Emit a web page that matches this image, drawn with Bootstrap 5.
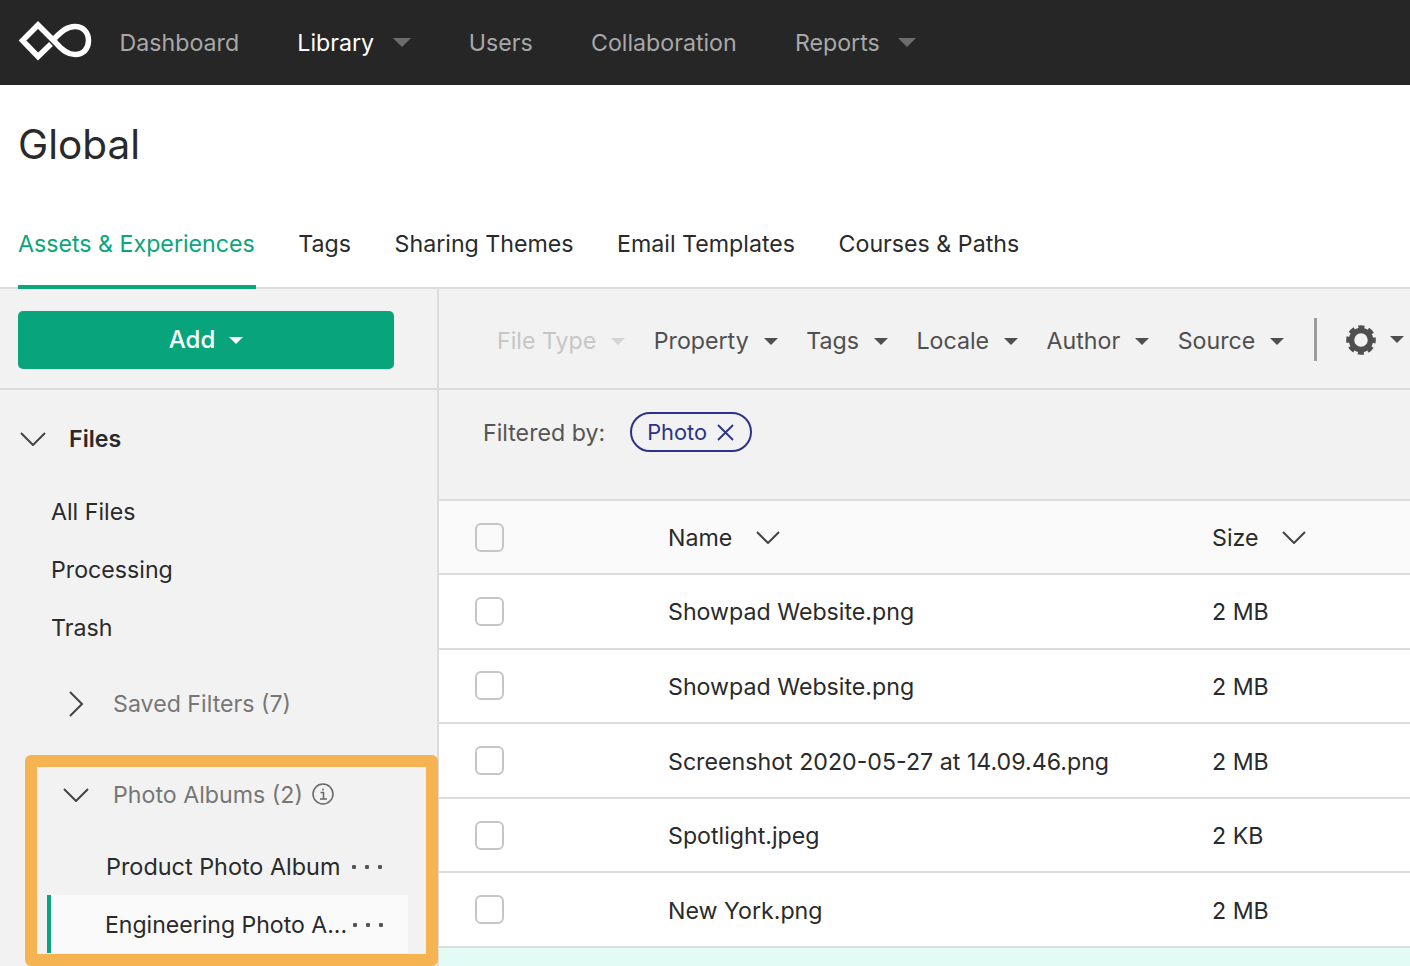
<!DOCTYPE html>
<html lang="en">
<head>
  <meta charset="UTF-8" />
  <title>Library - Global</title>
  <link href="https://cdn.jsdelivr.net/npm/bootstrap@5.3.0/dist/css/bootstrap.min.css" rel="stylesheet">
  <style>
    html, body { height: 966px; overflow: hidden; }
    body { font-family: Inter, "Liberation Sans", sans-serif; font-size: 23.2px; color: #2a2a2a; background: #fff; }
    a { text-decoration: none; color: inherit; }
    .top-bar { height: 85px; background: #262626; padding: 1px 0 0 18px; gap: 58.2px; }
    .top-bar .brand-mark { margin-right: -30.7px; margin-top: -5px; flex: none; }
    .top-link { color: #a8a8a8; white-space: nowrap; }
    .top-link.is-on { color: #fff; }
    .top-caret { display: inline-block; border-left: 9px solid transparent; border-right: 9px solid transparent; border-top: 9px solid #6c6c6c; margin-left: 18.5px; vertical-align: 4px; }
    .page-head { height: 204px; border-bottom: 2px solid #dcdcdc; padding-left: 18px; }
    .page-title { font-size: 40.5px; font-weight: 400; line-height: 50px; margin: 0; padding-top: 35px; color: #2a2a2a; }
    .tab-row { gap: 43.5px; margin-top: 60px; }
    .tab-item { height: 57px; line-height: 28px; white-space: nowrap; }
    .tab-item.is-on { color: #0aa57b; border-bottom: 4px solid #0aa57b; padding-right: 1px; margin-right: -1px; height: 59px; }
    .split { height: 677px; }
    .side-col { width: 439px; flex: none; background: #f2f2f2; border-right: 2px solid #dcdcdc; }
    .add-wrap { height: 101px; padding: 21.5px 0 0 18px; border-bottom: 2px solid #dcdcdc; }
    .btn-add { width: 376px; height: 58px; background: #08a57c; color: #fff; font-size: 24px; font-weight: 500; border: 0; border-radius: 5px; }
    .btn-add:hover { background: #08a57c; color: #fff; }
    .btn-add i { display: inline-block; border-left: 7px solid transparent; border-right: 7px solid transparent; border-top: 7px solid #fff; margin-left: 14px; vertical-align: 4px; }
    .side-head { height: 58px; }
    .files-head { padding-left: 20px; margin-top: 20px; font-weight: 600; }
    .files-head svg { margin-right: 23px; }
    .side-links { margin-top: 15px; }
    .side-link { height: 58px; line-height: 58px; padding-left: 51px; }
    .muted-head { color: #777; white-space: nowrap; }
    .saved-head { padding-left: 68px; margin-top: 18px; height: 58px; }
    .saved-head svg { margin-right: 29px; }
    .album-box { margin: 22px 0 0 25px; width: 413px; height: 211px; border: 12px solid #f5b451; border-radius: 6px; background: #f2f2f2; overflow: hidden; }
    .album-head { height: 56px; padding-left: 26px; }
    .album-head svg.chev { margin-right: 24px; }
    .album-head svg.info { margin-left: 9px; margin-top: -3px; }
    .album-row { height: 58px; padding-left: 69px; padding-right: 44px; white-space: nowrap; font-size: 23.4px; }
    .album-first { margin-top: 15px; }
    .album-row.is-on { background: #fafafa; margin: -1px 18px 0 10px; padding-left: 54px; padding-right: 25px; padding-top: 2px; border-left: 4px solid #0aa57b; font-size: 23.05px; }
    .album-name { flex: 1 1 auto; min-width: 0; }
    .dots { flex: none; width: 30px; height: 4px; background: radial-gradient(circle at 2px 2px, #555 2px, transparent 2.4px) 0 0 / 13px 4px repeat-x; }
    .main-col { flex: 1 1 auto; min-width: 0; background: #f2f2f2; }
    .filter-bar { height: 101px; padding: 5px 0 0 58px; border-bottom: 2px solid #dcdcdc; white-space: nowrap; color: #4f4f4f; }
    .filter-item { margin-right: 28.5px; flex: none; }
    .filter-item i { display: inline-block; border-left: 7px solid transparent; border-right: 7px solid transparent; border-top: 7px solid #4f4f4f; margin-left: 15px; vertical-align: 4px; }
    .filter-item.is-off { color: #c6c6c6; }
    .filter-item.is-off i { border-top-color: #d4d4d4; }
    .filter-sep { flex: none; width: 3px; height: 43px; background: #9c9c9c; margin: -3px 29px 0 1px; }
    .gear-icon { flex: none; margin-top: -2px; }
    .gear-caret { flex: none; display: inline-block; border-left: 7px solid transparent; border-right: 7px solid transparent; border-top: 7px solid #4f4f4f; margin: -4px 0 0 14px; }
    .filtered-row { height: 111px; padding: 21px 0 0 44px; border-bottom: 2px solid #dcdcdc; color: #555; }
    .filtered-label { padding-top: 5px; }
    .filter-chip { height: 40px; margin-left: 25px; padding: 0 16px 0 15px; border: 2px solid #2b3388; border-radius: 20px; color: #2b3388; margin-top: 1px; font-size: 21.8px; }
    .filter-chip svg { margin-left: 10px; }
    .file-row { height: 74.6px; background: #fff; border-bottom: 2px solid #dcdcdc; }
    .file-row.is-head { background: #fafafa; height: 74px; }
    .tick-cell { width: 229px; flex: none; padding-left: 36px; }
    .tick { width: 29px; height: 29px; border: 2px solid #c6c6c6; border-radius: 6px; background: #fff; }
    .is-head .tick { background: #fafafa; }
    .name-cell { width: 544px; flex: none; white-space: nowrap; padding-top: 3px; }
    .size-cell { flex: 1 1 auto; white-space: nowrap; padding-top: 3px; }
    .is-head svg { margin-left: 24px; margin-top: -2px; }
    .mint-row { height: 20px; background: #e2fbf4; }
  </style>
</head>
<body>
  <!-- Top navigation -->
  <nav class="top-bar d-flex align-items-center">
    <svg class="brand-mark" width="74" height="44" viewBox="0 0 74 44" fill="none" stroke="#fff" stroke-width="5.500">
      <path d="M33 25 L20 37.500 L4.500 21.500 L20 6 L38 24 C45 32 50 35.500 57 35.500 C66 35.500 70.500 29 70.500 21.500 C70.500 13 65 7.500 57 7.500 C49 7.500 44 12 37 19"/>
    </svg>
    <a class="top-link" href="#">Dashboard</a>
    <a class="top-link is-on" href="#">Library<span class="top-caret"></span></a>
    <a class="top-link" href="#">Users</a>
    <a class="top-link" href="#">Collaboration</a>
    <a class="top-link" href="#">Reports<span class="top-caret"></span></a>
  </nav>

  <!-- Title and tabs -->
  <header class="page-head">
    <h1 class="page-title">Global</h1>
    <div class="tab-row d-flex">
      <a class="tab-item is-on" href="#">Assets &amp; Experiences</a>
      <a class="tab-item" href="#">Tags</a>
      <a class="tab-item" href="#">Sharing Themes</a>
      <a class="tab-item" href="#">Email Templates</a>
      <a class="tab-item" href="#">Courses &amp; Paths</a>
    </div>
  </header>

  <div class="split d-flex">
    <!-- Left column -->
    <aside class="side-col">
      <div class="add-wrap">
        <button class="btn btn-add" type="button">Add<i></i></button>
      </div>
      <div class="side-head files-head d-flex align-items-center">
        <svg width="26" height="14" viewBox="0 0 26 14" fill="none" stroke="#444" stroke-width="2"><path d="M1 1l12 12L25 1"/></svg>
        Files
      </div>
      <div class="side-links">
        <a class="side-link d-block" href="#">All Files</a>
        <a class="side-link d-block" href="#">Processing</a>
        <a class="side-link d-block" href="#">Trash</a>
      </div>
      <div class="saved-head muted-head d-flex align-items-center">
        <svg width="16" height="26" viewBox="0 0 16 26" fill="none" stroke="#444" stroke-width="2"><path d="M2 1l12 12L2 25"/></svg>
        Saved Filters (7)
      </div>
      <section class="album-box">
        <div class="album-head muted-head d-flex align-items-center">
          <svg class="chev" width="26" height="14" viewBox="0 0 26 14" fill="none" stroke="#444" stroke-width="2"><path d="M1 1l12 12L25 1"/></svg>
          Photo Albums (2)
          <svg class="info" width="22" height="22" viewBox="0 0 22 22" fill="none" stroke="#666" stroke-width="1.500"><circle cx="11" cy="11" r="10"/><path d="M8.500 9.500H11.500V16M8 16H15M11 5.500V7.500"/></svg>
        </div>
        <div class="album-row album-first d-flex align-items-center"><span class="album-name">Product Photo Album</span><span class="dots"></span></div>
        <div class="album-row is-on d-flex align-items-center"><span class="album-name">Engineering Photo A...</span><span class="dots"></span></div>
      </section>
    </aside>

    <!-- Right column -->
    <main class="main-col">
      <div class="filter-bar d-flex align-items-center">
        <span class="filter-item is-off">File Type<i></i></span>
        <span class="filter-item">Property<i></i></span>
        <span class="filter-item">Tags<i></i></span>
        <span class="filter-item">Locale<i></i></span>
        <span class="filter-item">Author<i></i></span>
        <span class="filter-item">Source<i></i></span>
        <span class="filter-sep"></span>
        <svg class="gear-icon" width="30" height="30" viewBox="0 0 30 30" fill="none" stroke="#4f4f4f"><circle cx="15" cy="15" r="9.500" stroke-width="5.500"/><circle cx="15" cy="15" r="12.800" stroke-width="4" stroke-dasharray="6 4.050" stroke-dashoffset="3"/></svg>
        <span class="gear-caret"></span>
      </div>
      <div class="filtered-row d-flex align-items-start">
        <span class="filtered-label">Filtered by:</span>
        <span class="filter-chip d-inline-flex align-items-center">Photo
          <svg width="17" height="17" viewBox="0 0 17 17" fill="none" stroke="#2b3388" stroke-width="1.800"><path d="M1 1l15 15M16 1L1 16"/></svg>
        </span>
      </div>
      <div class="file-row is-head d-flex align-items-center">
        <div class="tick-cell"><div class="tick"></div></div>
        <div class="name-cell d-flex align-items-center">Name<svg width="24" height="13" viewBox="0 0 24 13" fill="none" stroke="#444" stroke-width="2"><path d="M1 1l11 11L23 1"/></svg></div>
        <div class="size-cell d-flex align-items-center">Size<svg width="24" height="13" viewBox="0 0 24 13" fill="none" stroke="#444" stroke-width="2"><path d="M1 1l11 11L23 1"/></svg></div>
      </div>
      <div id="fileRows"></div>
      <div class="mint-row"></div>
    </main>
  </div>

  <script src="https://cdn.jsdelivr.net/npm/bootstrap@5.3.0/dist/js/bootstrap.bundle.min.js"></script>
  <script>
    const files = [
      ["Showpad Website.png", "2 MB"],
      ["Showpad Website.png", "2 MB"],
      ["Screenshot 2020-05-27 at 14.09.46.png", "2 MB"],
      ["Spotlight.jpeg", "2 KB"],
      ["New York.png", "2 MB"]
    ];
    document.getElementById("fileRows").innerHTML = files.map(f => `
      <div class="file-row d-flex align-items-center">
        <div class="tick-cell"><div class="tick"></div></div>
        <div class="name-cell">${f[0]}</div>
        <div class="size-cell">${f[1]}</div>
      </div>`).join("");
  </script>
</body>
</html>
